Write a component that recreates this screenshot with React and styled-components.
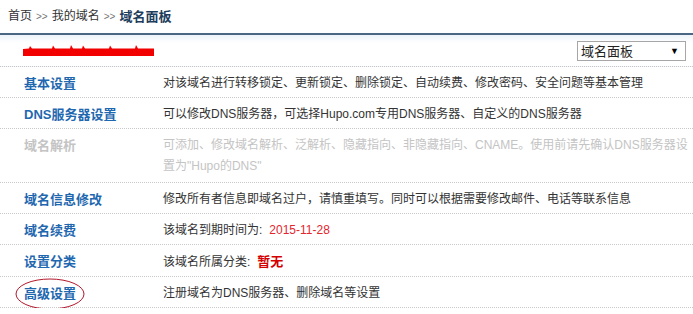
import React from "react";
import styled, { createGlobalStyle } from "styled-components";

const Global = createGlobalStyle`
  html, body { margin: 0; padding: 0; background: #fff; }
  body { font-family: "Liberation Sans", "Noto Sans CJK SC", sans-serif; font-size: 12px; color: #333; }
`;

const Page = styled.div`
  width: 693px;
`;

const Crumbs = styled.div`
  height: 33px;
  line-height: 33px;
  padding-left: 8px;
  border-bottom: 2px solid #4c6783;
  font-size: 12px;
  color: #333;
  display: flex;
  align-items: center;
  gap: 4px;
`;

const Sep = styled.span`
  color: #777;
  font-size: 10px;
`;

const Current = styled.span`
  font-weight: bold;
  font-size: 13px;
  color: #1e3d5c;
`;

const Header = styled.div`
  height: 31px;
  display: flex;
  align-items: center;
  justify-content: space-between;
  padding: 0 7px 0 23px;
  border-bottom: 1px dotted #c8c8c8;
  background: linear-gradient(#eef4fa, #fff 8px);
`;

const Select = styled.div`
  border: 1px solid #a6a6a6;
  display: flex;
  align-items: center;
  justify-content: space-between;
  padding: 0 6px 0 3px;
  box-sizing: border-box;
  width: 109px;
  height: 20px;
  font-size: 13px;
  color: #222;
`;

const Arrow = styled.span`
  font-size: 9px;
  color: #000;
`;

const Row = styled.div`
  display: grid;
  grid-template-columns: 163px 530px;
  border-bottom: 1px dotted #c8c8c8;
  padding: 6px 0 ${(p) => (p.$tall ? 5 : 3)}px;
  line-height: 21px;
`;

const Label = styled.div`
  position: relative;
  padding-left: 24px;
  font-weight: bold;
  font-size: 13px;
  color: ${(p) => (p.$disabled ? "#c4c4c4" : "#1f68b0")};
`;

const Desc = styled.div`
  font-size: 12px;
  color: ${(p) => (p.$disabled ? "#c4c4c4" : "#333")};
`;

const Red = styled.span`
  color: ${(p) => (p.$strong ? "#d40000" : "#e3252d")};
  font-weight: ${(p) => (p.$strong ? "bold" : "normal")};
  font-size: ${(p) => (p.$strong ? "13px" : "12px")};
  margin-left: 7px;
`;

const Circle = styled.svg`
  position: absolute;
  left: 15px;
  top: -5px;
  pointer-events: none;
`;

const Scribble = () => (
  <svg width="131" height="12" viewBox="0 0 131 12">
    <path
      d="M0 4 L6 3.5 L7 1 L9 3.5 L29 3.5 L30 0.5 L32 3.5 L47 3.5 L48 0 L50 3.5 L59 3.5 L60 0.5 L62 3.5 L86 3.5 L87 0.5 L89 3.5 L112 3.5 L113 0 L115 3.5 L131 3.5 L131 11 L0 11 Z"
      fill="#f20000"
    />
  </svg>
);

const rows = [
  { label: "基本设置", desc: "对该域名进行转移锁定、更新锁定、删除锁定、自动续费、修改密码、安全问题等基本管理" },
  { label: "DNS服务器设置", desc: "可以修改DNS服务器，可选择Hupo.com专用DNS服务器、自定义的DNS服务器" },
  {
    label: "域名解析",
    disabled: true,
    tall: true,
    desc: "可添加、修改域名解析、泛解析、隐藏指向、非隐藏指向、CNAME。使用前请先确认DNS服务器设置为\"Hupo的DNS\"",
  },
  { label: "域名信息修改", desc: "修改所有者信息即域名过户，请慎重填写。同时可以根据需要修改邮件、电话等联系信息" },
];

export default function App() {
  return (
    <Page>
      <Global />
      <Crumbs>
        <span>首页</span>
        <Sep>&gt;&gt;</Sep>
        <span>我的域名</span>
        <Sep>&gt;&gt;</Sep>
        <Current>域名面板</Current>
      </Crumbs>
      <Header>
        <Scribble />
        <Select>
          <span>域名面板</span>
          <Arrow>▼</Arrow>
        </Select>
      </Header>
      {rows.map((r) => (
        <Row key={r.label} $tall={r.tall}>
          <Label $disabled={r.disabled}>{r.label}</Label>
          <Desc $disabled={r.disabled}>{r.desc}</Desc>
        </Row>
      ))}
      <Row>
        <Label>域名续费</Label>
        <Desc>
          该域名到期时间为:<Red>2015-11-28</Red>
        </Desc>
      </Row>
      <Row>
        <Label>设置分类</Label>
        <Desc>
          该域名所属分类:<Red $strong>暂无</Red>
        </Desc>
      </Row>
      <Row>
        <Label>
          高级设置
          <Circle width="70" height="32" viewBox="0 0 70 32">
            <ellipse cx="35" cy="16" rx="34" ry="15" fill="none" stroke="#b3172c" strokeWidth="1" />
          </Circle>
        </Label>
        <Desc>注册域名为DNS服务器、删除域名等设置</Desc>
      </Row>
    </Page>
  );
}
